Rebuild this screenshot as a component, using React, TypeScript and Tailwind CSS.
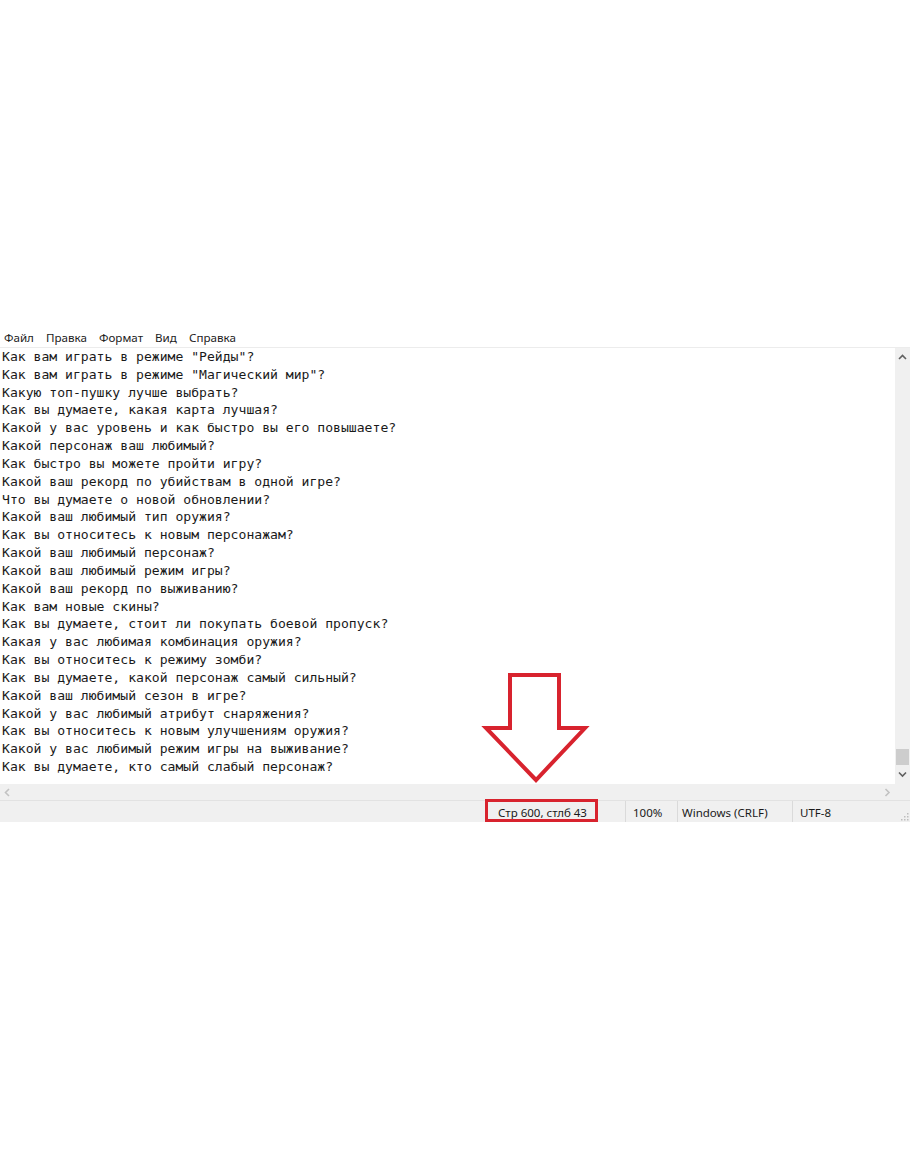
import React from "react";

const lines = [
  'Как вам играть в режиме "Рейды"?',
  'Как вам играть в режиме "Магический мир"?',
  "Какую топ-пушку лучше выбрать?",
  "Как вы думаете, какая карта лучшая?",
  "Какой у вас уровень и как быстро вы его повышаете?",
  "Какой персонаж ваш любимый?",
  "Как быстро вы можете пройти игру?",
  "Какой ваш рекорд по убийствам в одной игре?",
  "Что вы думаете о новой обновлении?",
  "Какой ваш любимый тип оружия?",
  "Как вы относитесь к новым персонажам?",
  "Какой ваш любимый персонаж?",
  "Какой ваш любимый режим игры?",
  "Какой ваш рекорд по выживанию?",
  "Как вам новые скины?",
  "Как вы думаете, стоит ли покупать боевой пропуск?",
  "Какая у вас любимая комбинация оружия?",
  "Как вы относитесь к режиму зомби?",
  "Как вы думаете, какой персонаж самый сильный?",
  "Какой ваш любимый сезон в игре?",
  "Какой у вас любимый атрибут снаряжения?",
  "Как вы относитесь к новым улучшениям оружия?",
  "Какой у вас любимый режим игры на выживание?",
  "Как вы думаете, кто самый слабый персонаж?",
];

const menu = [
  { t: "Файл", w: "w-[42px]" },
  { t: "Правка", w: "w-[53px]" },
  { t: "Формат", w: "w-[56px]" },
  { t: "Вид", w: "w-[34px]" },
  { t: "Справка", w: "w-[60px]" },
];

function Chevron({ dir }: { dir: "up" | "down" | "left" | "right" }) {
  const d =
    dir === "up"
      ? "M1 5 L4.5 1.5 L8 5"
      : dir === "down"
      ? "M1 1.5 L4.5 5 L8 1.5"
      : dir === "left"
      ? "M5 1 L1.5 4.5 L5 8"
      : "M1.5 1 L5 4.5 L1.5 8";
  const light = dir === "left" || dir === "right";
  const vert = dir === "up" || dir === "down";
  return (
    <svg width={vert ? 9 : 7} height={vert ? 7 : 9} viewBox={vert ? "0 0 9 7" : "0 0 7 9"}>
      <path d={d} fill="none" stroke={light ? "#c2c2c2" : "#606060"} strokeWidth={1.6} />
    </svg>
  );
}

export default function App() {
  return (
    <div className="relative w-[910px] h-[1155px] bg-white overflow-hidden">
      <div className="h-[329px]" />
      {/* menu bar */}
      <div className="h-[18px] flex items-center pl-[4px] text-[11.6px] text-[#222] [font-family:'Noto_Sans','Liberation_Sans',sans-serif]">
        {menu.map((m) => (
          <span key={m.t} className={`${m.w} leading-none`}>
            {m.t}
          </span>
        ))}
      </div>
      <div className="h-px bg-[#ececec]" />
      {/* editor */}
      <div className="flex h-[436px]">
        <div className="flex-1 pl-[2px] text-[13.1px] leading-[17.83px] text-[#1a1a1a] whitespace-pre [font-family:'DejaVu_Sans_Mono','Liberation_Mono',monospace] overflow-hidden">
          {lines.map((l, i) => (
            <div key={i}>{l}</div>
          ))}
        </div>
        <div className="w-[15px] bg-[#f0f0f0] flex flex-col items-center">
          <div className="h-[18px] flex items-center justify-center">
            <Chevron dir="up" />
          </div>
          <div className="flex-1" />
          <div className="w-[13px] h-[16px] bg-[#cdcdcd]" />
          <div className="h-[19px] flex items-center justify-center">
            <Chevron dir="down" />
          </div>
        </div>
      </div>
      {/* horizontal scrollbar */}
      <div className="h-[16px] flex bg-[#f0f0f0]">
        <div className="flex-1 flex items-center justify-between px-[4px]">
          <Chevron dir="left" />
          <Chevron dir="right" />
        </div>
        <div className="w-[15px]" />
      </div>
      {/* status bar */}
      <div className="h-px bg-[#e2e2e2]" />
      <div className="h-[21px] flex bg-[#f0f0f0] text-[11.5px] text-[#1a1a1a] [font-family:'Noto_Sans','Liberation_Sans',sans-serif] leading-none">
        <div className="w-[486px]" />
        <div className="relative w-[139px] flex items-center pl-[11px] pt-[2px] border-l border-[#dadada]">
          Стр 600, стлб 43
          <div className="absolute left-[-2px] top-[-2px] w-[113px] h-[23px] border-[3px] border-[#d8232e]" />
        </div>
        <div className="w-[52px] flex items-center pl-[7px] pt-[2px] border-l border-[#dadada]">100%</div>
        <div className="w-[115px] flex items-center pl-[4px] pt-[2px] border-l border-[#dadada]">Windows (CRLF)</div>
        <div className="flex-1 flex items-center pl-[7px] pt-[2px] border-l border-[#dadada] relative">
          UTF-8
          <svg className="absolute right-[1px] bottom-[1px]" width="9" height="9" viewBox="0 0 9 9">
            <rect x="7" y="1" width="1.5" height="1.5" fill="#bdbdbd" />
            <rect x="4" y="4" width="1.5" height="1.5" fill="#bdbdbd" />
            <rect x="7" y="4" width="1.5" height="1.5" fill="#bdbdbd" />
            <rect x="1" y="7" width="1.5" height="1.5" fill="#bdbdbd" />
            <rect x="4" y="7" width="1.5" height="1.5" fill="#bdbdbd" />
            <rect x="7" y="7" width="1.5" height="1.5" fill="#bdbdbd" />
          </svg>
        </div>
      </div>
      {/* annotation arrow */}
      <svg className="absolute left-[480px] top-[670px]" width="112" height="116" viewBox="0 0 112 116">
        <path
          d="M30 5 L79 5 L79 58 L105 58 L56 110 L6 58 L30 58 Z"
          fill="white"
          stroke="#d8232e"
          strokeWidth="4"
          strokeLinejoin="miter"
        />
      </svg>
    </div>
  );
}
